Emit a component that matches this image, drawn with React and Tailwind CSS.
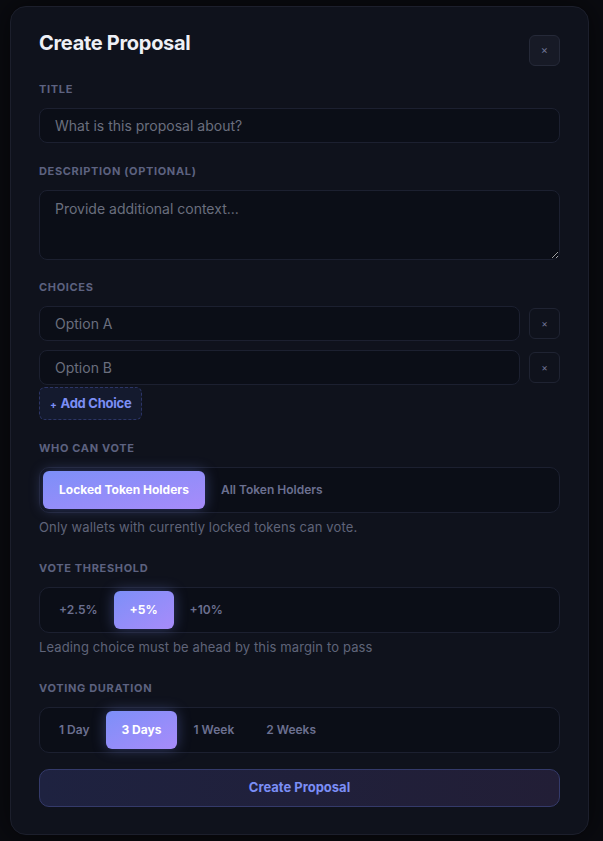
import { useState } from "react";

const labelCls =
  "block text-[11px] leading-4 font-bold uppercase tracking-[0.06em] text-[#5d6280]";

const inputCls =
  "w-full h-[35px] rounded-lg bg-[#0b0e17] border border-[#1c2030] px-[15px] text-[14px] text-[#c9ccd8] placeholder:text-[#6a6e7e] outline-none";

const Segmented = ({ options, value, onChange }) => (
  <div className="flex items-center rounded-[10px] border border-[#1c2030] bg-[#0b0e17] p-[3px] h-[46px]">
    {options.map((opt) => (
      <button
        key={opt}
        type="button"
        onClick={() => onChange(opt)}
        className={
          value === opt
            ? "h-[38px] px-4 rounded-md text-[12px] font-bold text-white bg-gradient-to-br from-[#7c8ff8] to-[#a78bfa] shadow-[0_0_14px_rgba(124,143,248,0.35)]"
            : "h-[38px] px-4 rounded-md text-[12px] font-semibold text-[#6b7090]"
        }
      >
        {opt}
      </button>
    ))}
  </div>
);

const App = () => {
  const [voters, setVoters] = useState("Locked Token Holders");
  const [threshold, setThreshold] = useState("+5%");
  const [duration, setDuration] = useState("3 Days");
  const [choices, setChoices] = useState(["Option A", "Option B"]);

  return (
    <div
      className="min-h-[841px] bg-[#0a0b10] pt-[6px] px-[10px]"
      style={{ fontFamily: "Inter, 'Noto Sans', sans-serif" }}
    >
      <section className="w-[579px] h-[829px] rounded-2xl bg-[#0f121c] border border-[#1c1f2c] px-[28px] pt-[22px] shadow-[0_0_30px_rgba(0,0,0,0.6)]">
        <div className="flex justify-between items-start">
          <h1 className="text-[20px] leading-7 font-bold text-[#eef0f6] tracking-[-0.015em]">
            Create Proposal
          </h1>
          <button
            type="button"
            className="mt-[6px] w-[31px] h-[31px] rounded-md bg-[#171a26] border border-[#252938] flex items-center justify-center text-[#6f7494] text-[11px]"
          >
            ×
          </button>
        </div>

        <label className={`${labelCls} mt-[15px] mb-[11px]`}>Title</label>
        <input type="text" placeholder="What is this proposal about?" className={inputCls} />

        <label className={`${labelCls} mt-5 mb-[11px]`}>Description (optional)</label>
        <textarea
          placeholder="Provide additional context..."
          className="block w-full h-[70px] rounded-lg bg-[#0b0e17] border border-[#1c2030] px-[15px] py-[7px] text-[14px] text-[#c9ccd8] placeholder:text-[#6a6e7e] outline-none resize-y"
        />

        <label className={`${labelCls} mt-[19px] mb-[11px]`}>Choices</label>
        <div className="flex flex-col gap-[9px]">
          {choices.map((c, i) => (
            <div key={i} className="flex items-center gap-[9px]">
              <input type="text" placeholder={c} className={inputCls} />
              <button
                type="button"
                onClick={() => setChoices(choices.filter((_, j) => j !== i))}
                className="shrink-0 w-[31px] h-[31px] rounded-md border border-[#1f2332] flex items-center justify-center text-[#6f7494] text-[10px]"
              >
                ×
              </button>
            </div>
          ))}
        </div>
        <button
          type="button"
          onClick={() => setChoices([...choices, `Option ${String.fromCharCode(65 + choices.length)}`])}
          className="mt-[2px] h-[33px] px-[10px] rounded-md border border-dashed border-[#2c3566] bg-[#141a2e] text-[13px] tracking-[-0.02em] font-bold text-[#7b8ef5]"
        >
          <span className="text-[10px] mr-[4px]">+</span>Add Choice
        </button>

        <label className={`${labelCls} mt-5 mb-[11px]`}>Who can vote</label>
        <Segmented
          options={["Locked Token Holders", "All Token Holders"]}
          value={voters}
          onChange={setVoters}
        />
        <p className="mt-1 text-[13px] leading-5 tracking-[0.01em] text-[#5f6479]">
          Only wallets with currently locked tokens can vote.
        </p>

        <label className={`${labelCls} mt-[23px] mb-[11px]`}>Vote threshold</label>
        <Segmented options={["+2.5%", "+5%", "+10%"]} value={threshold} onChange={setThreshold} />
        <p className="mt-1 text-[13px] leading-5 tracking-[0.01em] text-[#5f6479]">
          Leading choice must be ahead by this margin to pass
        </p>

        <label className={`${labelCls} mt-[23px] mb-[11px]`}>Voting duration</label>
        <Segmented
          options={["1 Day", "3 Days", "1 Week", "2 Weeks"]}
          value={duration}
          onChange={setDuration}
        />

        <button
          type="button"
          className="mt-4 w-full h-[38px] rounded-[10px] border border-[#343a6a] bg-gradient-to-r from-[#1e2240] to-[#221e36] text-[13px] font-bold text-[#7b8ef5]"
        >
          Create Proposal
        </button>
      </section>
    </div>
  );
};

export default App;
